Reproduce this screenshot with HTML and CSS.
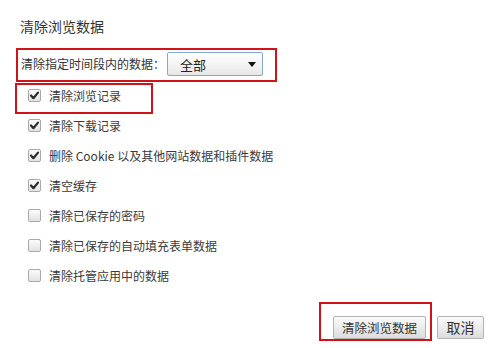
FILE: index.html
```html
<!DOCTYPE html>
<html lang="zh-CN">
<head>
<meta charset="utf-8">
<title>清除浏览数据</title>
<link rel="stylesheet" href="styles.css">
</head>
<body>
<div class="dialog">
  <h1 class="title">清除浏览数据</h1>
  <div class="range">
    <span class="mark mark-range"></span>
    <span class="range-label">清除指定时间段内的数据：</span>
    <div class="select"><span>全部</span><span class="arrow"></span></div>
  </div>
  <ul class="list">
    <li class="item">
      <span class="mark mark-item"></span>
      <span class="box checked"><svg viewBox="0 0 13 13" width="13" height="13"><path d="M3 6.5 L5.4 9.2 L10 3.6" fill="none" stroke="#2b2b2b" stroke-width="2.2" stroke-linecap="round" stroke-linejoin="round"/></svg></span>
      <span class="text">清除浏览记录</span>
    </li>
    <li class="item">
      <span class="box checked"><svg viewBox="0 0 13 13" width="13" height="13"><path d="M3 6.5 L5.4 9.2 L10 3.6" fill="none" stroke="#2b2b2b" stroke-width="2.2" stroke-linecap="round" stroke-linejoin="round"/></svg></span>
      <span class="text">清除下载记录</span>
    </li>
    <li class="item">
      <span class="box checked"><svg viewBox="0 0 13 13" width="13" height="13"><path d="M3 6.5 L5.4 9.2 L10 3.6" fill="none" stroke="#2b2b2b" stroke-width="2.2" stroke-linecap="round" stroke-linejoin="round"/></svg></span>
      <span class="text">删除 Cookie 以及其他网站数据和插件数据</span>
    </li>
    <li class="item">
      <span class="box checked"><svg viewBox="0 0 13 13" width="13" height="13"><path d="M3 6.5 L5.4 9.2 L10 3.6" fill="none" stroke="#2b2b2b" stroke-width="2.2" stroke-linecap="round" stroke-linejoin="round"/></svg></span>
      <span class="text">清空缓存</span>
    </li>
    <li class="item">
      <span class="box"></span>
      <span class="text">清除已保存的密码</span>
    </li>
    <li class="item">
      <span class="box"></span>
      <span class="text">清除已保存的自动填充表单数据</span>
    </li>
    <li class="item">
      <span class="box"></span>
      <span class="text">清除托管应用中的数据</span>
    </li>
  </ul>
  <div class="footer">
    <button class="btn btn-primary"><span class="mark mark-btn"></span>清除浏览数据</button>
    <button class="btn btn-cancel">取消</button>
  </div>
</div>
</body>
</html>
```

FILE: styles.css
```css
html, body {
  margin: 0;
  padding: 0;
  background: #ffffff;
}

body {
  width: 504px;
  height: 348px;
  overflow: hidden;
  font-family: "Microsoft YaHei", "Noto Sans CJK SC", "Noto Sans", sans-serif;
  color: #333333;
}

.dialog {
  display: flex;
  flex-direction: column;
  padding: 0 20px 0 20px;
}

.title {
  margin: 16px 0 0 0;
  font-size: 14px;
  font-weight: normal;
  line-height: 20px;
  height: 20px;
  color: #333333;
}

.range {
  position: relative;
  display: flex;
  align-items: center;
  height: 24px;
  margin-top: 16px;
  font-size: 12px;
}

.range-label {
  margin-left: 1px;
  width: 146px;
  white-space: nowrap;
  line-height: 24px;
}

.select {
  position: relative;
  box-sizing: border-box;
  width: 96px;
  height: 24px;
  display: flex;
  align-items: center;
  justify-content: space-between;
  padding: 0 6px 0 12px;
  border: 1px solid #86a9d4;
  border-radius: 2px;
  background: linear-gradient(#ffffff, #f4f4f4 50%, #e6e6e6);
  font-size: 13px;
  color: #222;
}

.arrow {
  width: 0;
  height: 0;
  border-left: 4px solid transparent;
  border-right: 4px solid transparent;
  border-top: 5px solid #111;
}

.list {
  list-style: none;
  margin: 4px 0 0 0;
  padding: 0;
}

.item {
  position: relative;
  display: flex;
  align-items: center;
  height: 30px;
  padding-left: 8px;
  font-size: 12px;
}

.box {
  box-sizing: border-box;
  width: 13px;
  height: 13px;
  margin-right: 8px;
  border: 1px solid #a9a9a9;
  border-radius: 2px;
  background: linear-gradient(#fbfbfb, #e2e2e2);
  display: flex;
  align-items: center;
  justify-content: center;
  flex: none;
}

.box svg {
  display: block;
  flex: none;
  margin: -1px;
}

.text {
  white-space: nowrap;
  color: #3a3a3a;
}

.footer {
  display: flex;
  justify-content: flex-end;
  gap: 11px;
  margin-top: 26px;
}

.btn {
  position: relative;
  box-sizing: border-box;
  height: 23px;
  padding: 0;
  border: 1px solid #b4b4b4;
  border-radius: 2px;
  background: linear-gradient(#fafafa, #e9e9e9 60%, #dcdcdc);
  font-family: "Microsoft YaHei", "Noto Sans CJK SC", sans-serif;
  color: #333;
  line-height: 21px;
  white-space: nowrap;
  text-align: center;
}

.btn-primary {
  width: 93px;
  font-size: 12.5px;
}

.btn-cancel {
  width: 47px;
  font-size: 14px;
}

/* red annotation frames drawn over the UI */
.mark {
  position: absolute;
  box-sizing: border-box;
  border: 2px solid #d01318;
  pointer-events: none;
}

.mark-range {
  left: -4px;
  top: -4px;
  width: 261px;
  height: 34px;
}

.mark-item {
  left: -5px;
  top: 3px;
  width: 138px;
  height: 31px;
}

.mark-btn {
  left: -15px;
  top: -15px;
  width: 113px;
  height: 39px;
}
```
